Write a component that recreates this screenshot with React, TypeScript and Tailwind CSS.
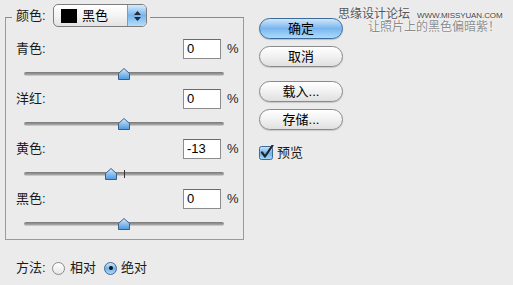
import React from "react";

const font = { fontFamily: '"Liberation Sans", "Noto Sans CJK SC", sans-serif' };

function Thumb({ value }: { value: number }) {
  const center = 100 + value;
  return (
    <svg
      width="14"
      height="14"
      viewBox="0 0 14 14"
      className="absolute top-[8px]"
      style={{ left: center - 7 }}
    >
      <defs>
        <linearGradient id="tg" x1="0" y1="0" x2="0" y2="1">
          <stop offset="0" stopColor="#dceefc" />
          <stop offset="0.5" stopColor="#8cc0ee" />
          <stop offset="1" stopColor="#4f98e0" />
        </linearGradient>
      </defs>
      <path d="M1.5 12.5 V6.5 L7 1.5 L12.5 6.5 V12.5 Z" fill="url(#tg)" stroke="#3c5f85" strokeWidth="1" strokeLinejoin="round" />
    </svg>
  );
}

function Row({ label, value, num, tick }: { label: string; value: string; num: number; tick?: boolean }) {
  return (
    <div>
      <div className="flex items-center h-[20px] pl-[10px]">
        <div className="w-[167px] text-[13px] text-[#1a1a1a]">{label}</div>
        <div className="w-[38px] h-[20px] bg-white border border-[#8d8d8d] border-t-[#6a6a6a] text-[13px] leading-[18px] pl-[3px] text-black">
          {value}
        </div>
        <div className="ml-[6px] text-[13px] text-[#222]">%</div>
      </div>
      <div className="relative h-[30px] ml-[18px] w-[200px]">
        <div className="absolute left-0 right-0 top-[13px] h-[4px] rounded-full bg-gradient-to-b from-[#777] to-[#aaa] border-b border-[#c8c8c8]" />
        {tick && <div className="absolute left-[100px] top-[11px] w-px h-[8px] bg-[#333]" />}
        <Thumb value={num} />
      </div>
    </div>
  );
}

function AquaButton({ label, primary }: { label: string; primary?: boolean }) {
  return (
    <div
      className={
        "w-[84px] h-[21px] rounded-full border flex items-center justify-center text-[13px] text-black " +
        (primary
          ? "border-[#3e6a9a] bg-gradient-to-b from-[#cfe6fb] via-[#79b6ee] to-[#a9dbfd] shadow-[0_1px_1px_rgba(0,0,0,0.2)]"
          : "border-[#8a8a8a] bg-gradient-to-b from-[#ffffff] via-[#f1f1f1] to-[#e0e0e0] shadow-[0_1px_1px_rgba(0,0,0,0.15)]")
      }
    >
      {label}
    </div>
  );
}

export default function App() {
  return (
    <div className="relative w-[513px] h-[285px] bg-[#ebebeb] overflow-hidden" style={font}>
      <div className="flex">
        <div className="ml-[5px] mt-[17px] w-[239px] h-[223px] border border-[#9a9a9a] border-t-[#8a8a8a]">
          <div className="-mt-[14px] ml-[6px] w-fit flex items-center bg-[#ebebeb] pl-[4px] pr-[3px]">
            <div className="w-[37px] text-[13px] text-[#1a1a1a]">颜色:</div>
            <div className="w-[94px] h-[23px] rounded-[5px] border border-[#7d7d7d] bg-gradient-to-b from-white via-[#f4f4f4] to-[#e2e2e2] flex items-center overflow-hidden">
              <div className="ml-[7px] w-[16px] h-[14px] bg-black" />
              <div className="ml-[5px] text-[13px] text-black flex-1">黑色</div>
              <div className="w-[19px] h-full bg-gradient-to-b from-[#d6ebfc] via-[#78b4ec] to-[#b5defc] border-l border-[#7a9cc0] flex flex-col items-center justify-center gap-[2px]">
                <svg width="7" height="4" viewBox="0 0 7 4"><path d="M0 4 L3.5 0 L7 4 Z" fill="#1d2b3a" /></svg>
                <svg width="7" height="4" viewBox="0 0 7 4"><path d="M0 0 L3.5 4 L7 0 Z" fill="#1d2b3a" /></svg>
              </div>
            </div>
          </div>
          <div className="mt-[12px]">
            <Row label="青色:" value="0" num={0} />
            <Row label="洋红:" value="0" num={0} />
            <Row label="黄色:" value="-13" num={-13} tick />
            <Row label="黑色:" value="0" num={0} />
          </div>
        </div>
        <div className="ml-[15px] mt-[18px] flex flex-col">
          <AquaButton label="确定" primary />
          <div className="mt-[7px]"><AquaButton label="取消" /></div>
          <div className="mt-[14px]"><AquaButton label="载入..." /></div>
          <div className="mt-[7px]"><AquaButton label="存储..." /></div>
          <div className="mt-[13px] flex items-center">
            <svg width="15" height="15" viewBox="0 0 15 15">
              <defs>
                <linearGradient id="cb" x1="0" y1="0" x2="0" y2="1">
                  <stop offset="0" stopColor="#cfe6fb" />
                  <stop offset="0.5" stopColor="#76b2ea" />
                  <stop offset="1" stopColor="#a8d8fb" />
                </linearGradient>
              </defs>
              <rect x="0.5" y="1.5" width="13" height="13" rx="2" fill="url(#cb)" stroke="#3f6a97" />
              <path d="M3 7.5 L6 11.5 L13.5 0.5" fill="none" stroke="#1b2733" strokeWidth="2.2" strokeLinecap="round" strokeLinejoin="round" />
            </svg>
            <span className="ml-[3px] text-[13px] text-[#1a1a1a]">预览</span>
          </div>
        </div>
      </div>
      <div className="mt-[21px] ml-[16px] flex items-center h-[14px] text-[13px] text-[#1a1a1a]">
        <span className="w-[36px]">方法:</span>
        <div className="w-[13px] h-[13px] rounded-full border border-[#8a8a8a] bg-gradient-to-b from-[#fff] to-[#e6e6e6]" />
        <span className="ml-[5px] w-[34px]">相对</span>
        <div className="w-[13px] h-[13px] rounded-full border border-[#3f6a97] bg-gradient-to-b from-[#cfe6fb] via-[#76b2ea] to-[#a8d8fb] flex items-center justify-center">
          <div className="w-[4px] h-[4px] rounded-full bg-[#111]" />
        </div>
        <span className="ml-[4px]">绝对</span>
      </div>
      <div className="absolute left-[338px] top-[7px] flex items-baseline whitespace-nowrap">
        <span className="text-[12px] leading-[14px] text-[#555] [text-shadow:0_0_2px_#fff]">思缘设计论坛</span>
        <span className="ml-[7px] text-[8px] text-[#444] tracking-[-0.1px] [text-shadow:0_0_2px_#fff]">WWW.MISSYUAN.COM</span>
      </div>
      <div className="absolute left-[368px] top-[20px] whitespace-nowrap text-[12px] leading-[14px] text-[#8c8c8c] [text-shadow:0_0_2px_#fff,0_0_1px_#fff]">
        让照片上的黑色偏暗紫！
      </div>
    </div>
  );
}
